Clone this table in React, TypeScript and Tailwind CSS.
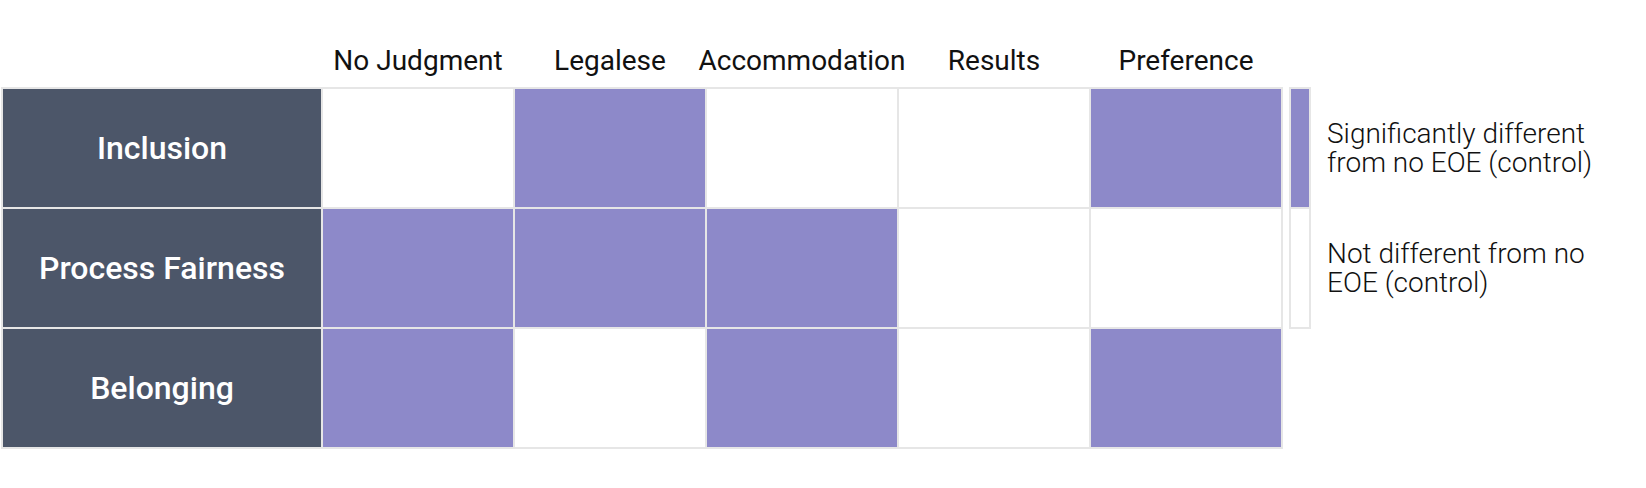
import React from "react";

const cols = ["No Judgment", "Legalese", "Accommodation", "Results", "Preference"];
const rows: { label: string; sig: boolean[] }[] = [
  { label: "Inclusion", sig: [false, true, false, false, true] },
  { label: "Process Fairness", sig: [true, true, true, false, false] },
  { label: "Belonging", sig: [true, false, true, false, true] },
];

export default function App() {
  return (
    <div
      className="flex w-[1646px] h-[488px] bg-white pl-[1px] pt-[43px]"
      style={{ fontFamily: "Roboto, 'Liberation Sans', sans-serif" }}
    >
      <div className="flex flex-col">
        <div className="grid grid-cols-[318px_repeat(5,190px)] gap-x-[2px] px-[2px] h-[44px]">
          <div />
          {cols.map((c) => (
            <div key={c} className="flex justify-center pt-[1px] text-[28px] leading-[34px] text-[#111111] whitespace-nowrap">
              <span>{c}</span>
            </div>
          ))}
        </div>
        <div className="grid grid-cols-[318px_repeat(5,190px)] grid-rows-[repeat(3,118px)] gap-[2px] p-[2px] bg-[#e6e6e6]">
          {rows.map((r) => (
            <React.Fragment key={r.label}>
              <div className="bg-[#4c5669] flex items-center justify-center text-white text-[32px] font-medium">
                {r.label}
              </div>
              {r.sig.map((s, i) => (
                <div key={i} className={s ? "bg-[#8d89c9]" : "bg-white"} />
              ))}
            </React.Fragment>
          ))}
        </div>
      </div>
      <div className="ml-[6px] mt-[44px] self-start flex flex-col gap-[2px] p-[2px] bg-[#e6e6e6] w-[22px]">
        <div className="h-[118px] bg-[#8d89c9]" />
        <div className="h-[118px] bg-white" />
      </div>
      <div className="ml-[16px] mt-[46px] flex flex-col gap-[2px] w-[290px]">
        <div className="h-[118px] flex items-center text-[28px] leading-[29px] font-light text-[#111111]">
          Significantly different from no EOE (control)
        </div>
        <div className="h-[118px] flex items-center text-[28px] leading-[29px] font-light text-[#111111]">
          Not different from no EOE (control)
        </div>
      </div>
    </div>
  );
}
